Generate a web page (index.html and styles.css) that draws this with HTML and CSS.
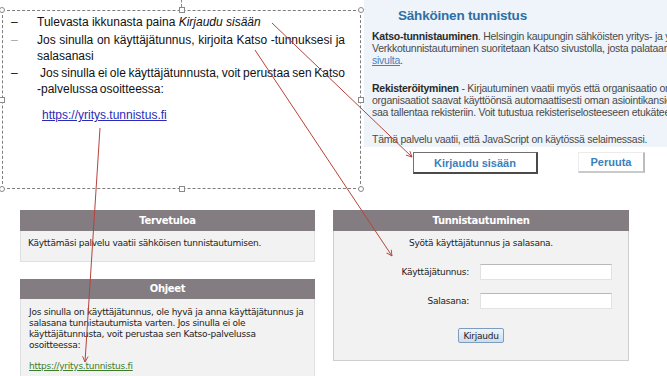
FILE: index.html
```html
<!DOCTYPE html>
<html lang="fi">
<head>
<meta charset="utf-8">
<title>Kirjautumisohje</title>
<link rel="stylesheet" href="styles.css">
</head>
<body>
<div class="slide">
  <div class="top-row">
    <div class="textbox">
      <div class="item"><span class="dash">–</span><p class="item-text">Tulevasta ikkunasta paina <i>Kirjaudu sisään</i></p></div>
      <div class="item"><span class="dash dash-light">–</span><p class="item-text">Jos sinulla on käyttäjätunnus, kirjoita Katso <span class="nw">-tunnuksesi</span> ja salasanasi</p></div>
      <div class="item"><span class="dash">–</span><p class="item-text indent">Jos sinulla ei ole käyttäjätunnusta, voit perustaa sen Katso <span class="nw">-palvelussa</span> osoitteessa:</p></div>
      <a class="tb-link" href="#">https://yritys.tunnistus.fi</a>
      <span class="rot-line"></span>
      <span class="handle round h-tl"></span>
      <span class="handle round h-tr"></span>
      <span class="handle round h-bl"></span>
      <span class="handle round h-br"></span>
      <span class="handle h-tc"></span>
      <span class="handle h-bc"></span>
      <span class="handle h-ml"></span>
      <span class="handle h-mr"></span>
    </div>
    <div class="web">
      <div class="web-info">
        <h1 class="web-title">Sähköinen tunnistus</h1>
        <p class="web-p">
          <span class="ln"><b>Katso-tunnistauminen</b>. Helsingin kaupungin sähköisten yritys- ja yhteisöpalvelujen käyttäjät tunnistetaan.</span>
          <span class="ln">Verkkotunnistautuminen suoritetaan Katso sivustolla, josta palataan takaisin palvelun</span>
          <span class="ln"><a class="web-link" href="#">sivulta</a>.</span>
        </p>
        <p class="web-p">
          <span class="ln"><b>Rekisteröityminen</b> - Kirjautuminen vaatii myös että organisaatio on rekisteröitynyt palveluun.</span>
          <span class="ln">organisaatiot saavat käyttöönsä automaattisesti oman asiointikansion, jonka tiedot palvelu</span>
          <span class="ln">saa tallentaa rekisteriin. Voit tutustua rekisteriselosteeseen etukäteen.</span>
        </p>
        <p class="web-p">
          <span class="ln">Tämä palvelu vaatii, että JavaScript on käytössä selaimessasi.</span>
        </p>
      </div>
      <div class="web-buttons">
        <button class="btn-primary" type="button">Kirjaudu sisään</button>
        <button class="btn-secondary" type="button">Peruuta</button>
      </div>
    </div>
  </div>

  <div class="bottom-row">
    <div class="col-left">
      <section class="panel">
        <h2 class="panel-head">Tervetuloa</h2>
        <div class="panel-body welcome-body">Käyttämäsi palvelu vaatii sähköisen tunnistautumisen.</div>
      </section>
      <section class="panel">
        <h2 class="panel-head head-short">Ohjeet</h2>
        <div class="panel-body help-body">
          <p class="help-text">Jos sinulla on käyttäjätunnus, ole hyvä ja anna käyttäjätunnus ja<br>salasana tunnistautumista varten. Jos sinulla ei ole<br>käyttäjätunnusta, voit perustaa sen Katso-palvelussa<br>osoitteessa:</p>
          <a class="green-link" href="#">https://yritys.tunnistus.fi</a>
        </div>
      </section>
    </div>
    <section class="panel panel-login">
      <h2 class="panel-head">Tunnistautuminen</h2>
      <div class="panel-body login-body">
        <p class="login-intro">Syötä käyttäjätunnus ja salasana.</p>
        <div class="login-grid">
          <label class="login-label" for="user">Käyttäjätunnus:</label>
          <input class="login-input" id="user" type="text">
          <label class="login-label" for="pass">Salasana:</label>
          <input class="login-input" id="pass" type="password">
        </div>
        <button class="login-submit" type="button">Kirjaudu</button>
      </div>
    </section>
  </div>

  <svg class="arrows" width="667" height="376" viewBox="0 0 667 376" aria-hidden="true">
    <defs>
      <marker id="ah" viewBox="0 0 10 10" refX="9" refY="5" markerWidth="7" markerHeight="7" orient="auto" markerUnits="userSpaceOnUse">
        <path d="M1,1 L9,5 L1,9" fill="none" stroke="#b8423c" stroke-width="1.3"/>
      </marker>
    </defs>
    <line x1="272" y1="23" x2="412" y2="157" stroke="#b8423c" stroke-width="1" marker-end="url(#ah)"/>
    <line x1="255" y1="50" x2="392" y2="256" stroke="#b8423c" stroke-width="1" marker-end="url(#ah)"/>
    <line x1="100" y1="128" x2="85" y2="362" stroke="#b8423c" stroke-width="1" marker-end="url(#ah)"/>
  </svg>
</div>
</body>
</html>
```

FILE: styles.css
```css
* { box-sizing: border-box; }

html, body {
  margin: 0;
  padding: 0;
  background: #fff;
}

.slide {
  position: relative;
  width: 667px;
  height: 376px;
  overflow: hidden;
  background: #fff;
}

/* ---------- top row ---------- */
.top-row {
  display: flex;
  align-items: flex-start;
  height: 189px;
}

.textbox {
  position: relative;
  flex: none;
  margin: 10px 0 0 2px;
  width: 359px;
  height: 179px;
  border: 1px dashed #7d7d7d;
  padding: 3px 0 0 8px;
  font-family: "Liberation Sans", Arial, sans-serif;
  font-size: 12px;
  line-height: 16px;
  color: #111;
}

.item {
  display: flex;
  margin-bottom: 1px;
}
.item:first-child { margin-bottom: 2px; }

.dash {
  flex: none;
  width: 26px;
}
.dash-light { color: #a8a8a8; }

.item-text {
  margin: 0;
  width: 308px;
  text-align: justify;
}
.indent {
  text-indent: 3px;
  word-spacing: -1.2px;
}
.nw { white-space: nowrap; }

.tb-link {
  display: inline-block;
  margin: 9px 0 0 31px;
  color: #2b2bb8;
  text-decoration: underline;
}

.handle {
  position: absolute;
  width: 6px;
  height: 6px;
  background: #fff;
  border: 1px solid #8a8a8a;
}
.round { border-radius: 50%; }
.h-tl { left: -4px; top: -4px; }
.h-tr { right: -4px; top: -4px; }
.h-bl { left: -4px; bottom: -4px; }
.h-br { right: -4px; bottom: -4px; }
.h-tc { left: calc(50% - 3px); top: -4px; }
.h-bc { left: calc(50% - 3px); bottom: -4px; }
.h-ml { left: -4px; top: calc(50% - 3px); }
.h-mr { right: -4px; top: calc(50% - 3px); }

.rot-line {
  position: absolute;
  left: calc(50% - 0.5px);
  top: -16px;
  height: 12px;
  border-left: 1px dashed #8a8a8a;
}

.web {
  flex: none;
  margin-left: 3px;
  width: 303px;
  font-family: "Liberation Sans", Arial, sans-serif;
}

.web-info {
  height: 147px;
  padding: 8px 0 2px 8px;
  background: #eef4f9;
}

.web-title {
  margin: 0 0 6px 26px;
  font-size: 13.5px;
  line-height: 16px;
  font-weight: bold;
  letter-spacing: -0.2px;
  color: #2f6ea6;
}

.web-p {
  margin: 0 0 15px;
  font-size: 10.5px;
  line-height: 12px;
  letter-spacing: -0.25px;
  color: #4a4a4a;
  white-space: nowrap;
}
.web-p:first-of-type { margin-bottom: 16px; }
.web-p b { color: #2a2a2a; }
.ln { display: block; }

.web-link {
  color: #4a80b8;
  text-decoration: underline;
}

.web-buttons {
  display: flex;
  align-items: flex-start;
  gap: 40px;
  margin-top: 5px;
  padding-left: 49px;
}

.btn-primary,
.btn-secondary {
  padding: 0;
  background: #fff;
  font-family: "Liberation Sans", Arial, sans-serif;
  font-size: 11px;
  font-weight: bold;
  color: #3b7fbd;
}

.btn-primary {
  width: 125px;
  height: 22px;
  border: 1px solid #707070;
  border-right: 2px solid #4a4a4a;
  border-bottom: 2px solid #4a4a4a;
}

.btn-secondary {
  width: 67px;
  height: 21px;
  border: 1px solid #ececec;
  border-right: 2px solid #bcbcbc;
  border-bottom: 2px solid #cacaca;
}

/* ---------- bottom row ---------- */
.bottom-row {
  display: flex;
  align-items: flex-start;
  gap: 18px;
  margin-top: 21px;
  padding-left: 20px;
  font-family: "DejaVu Sans", Verdana, sans-serif;
}

.col-left {
  flex: none;
  width: 295px;
  display: flex;
  flex-direction: column;
  gap: 17px;
}

.panel-head {
  margin: 0;
  height: 21px;
  background: #837c81;
  color: #fff;
  font-size: 10px;
  font-weight: bold;
  line-height: 21px;
  letter-spacing: -0.3px;
  text-align: center;
}
.head-short {
  height: 20px;
  line-height: 20px;
}

.panel-body {
  background: #f2f2f2;
  border: 1px solid #e0e0e0;
  border-top: 0;
  font-size: 9px;
  line-height: 11px;
  letter-spacing: -0.25px;
  color: #222;
}

.welcome-body {
  height: 31px;
  padding: 7px 7px;
}

.help-body {
  height: 90px;
  padding: 8px 8px;
}

.help-text {
  margin: 0;
  white-space: nowrap;
}

.green-link {
  display: inline-block;
  margin-top: 10px;
  color: #3d7d2a;
  text-decoration: underline;
}

.panel-login {
  flex: none;
  width: 296px;
}

.login-body {
  height: 130px;
  padding-top: 6px;
  border-color: #cfcfcf;
}

.login-intro {
  margin: 0 0 15px;
  line-height: 12px;
  text-align: center;
}

.login-grid {
  display: grid;
  grid-template-columns: 135px 132px;
  column-gap: 11px;
  row-gap: 13px;
  align-items: center;
}

.login-label { text-align: right; }

.login-input {
  height: 16px;
  padding: 0;
  background: #fff;
  border: 1px solid #e2e2e2;
  border-top-color: #b8b8b8;
}

.login-submit {
  display: block;
  margin: 19px auto 0;
  width: 46px;
  height: 15px;
  padding: 0;
  border: 1px solid #7d9dbf;
  border-radius: 2px;
  background: linear-gradient(#eef4fb, #cddded);
  font-family: "DejaVu Sans", Verdana, sans-serif;
  font-size: 9px;
  letter-spacing: -0.25px;
  color: #222;
}

/* ---------- annotation arrows ---------- */
.arrows {
  position: absolute;
  left: 0;
  top: 0;
  pointer-events: none;
}
```
